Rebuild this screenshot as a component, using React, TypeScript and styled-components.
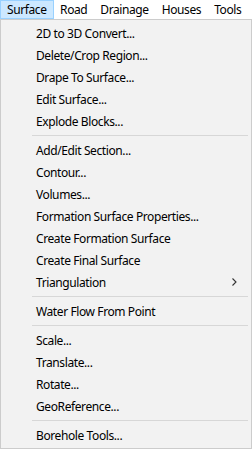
import React from "react";
import styled, { createGlobalStyle } from "styled-components";

const Global = createGlobalStyle`
  html, body { margin: 0; padding: 0; background: #ffffff; }
  body { font-family: "Noto Sans", "Liberation Sans", sans-serif; }
`;

const Page = styled.div`
  width: 252px;
  height: 449px;
  display: flex;
  flex-direction: column;
  overflow: hidden;
  font-size: 12px;
  letter-spacing: -0.4px;
  color: #000;
`;

const MenuBar = styled.div`
  height: 19px;
  display: flex;
  align-items: stretch;
  background: #ffffff;
`;

const BarItem = styled.div<{ $active?: boolean }>`
  display: flex;
  align-items: center;
  padding: 0 ${(p) => (p.$active ? "6px" : "6.5px")};
  border: ${(p) => (p.$active ? "1px solid #99d1ff" : "none")};
  background: ${(p) => (p.$active ? "#cce8ff" : "transparent")};
  line-height: 17px;
  white-space: nowrap;
`;

const Popup = styled.div`
  width: 252px;
  height: 430px;
  box-sizing: border-box;
  border: 1px solid #cccccc;
  background: #f2f2f2;
  padding: 2px 2px 1px 2px;
  display: flex;
  flex-direction: column;
`;

const Item = styled.div`
  height: 22px;
  display: flex;
  align-items: center;
  padding-left: 33px;
  padding-right: 12px;
  white-space: nowrap;
`;

const Label = styled.span`
  flex: 1;
`;

const Separator = styled.div`
  height: 7px;
  display: flex;
  align-items: center;
  padding-left: 29px;
  padding-right: 1px;
  &::after {
    content: "";
    flex: 1;
    height: 1px;
    background: #d7d7d7;
  }
`;

const Chevron = () => (
  <svg width="5" height="8" viewBox="0 0 5 8" style={{ display: "block" }}>
    <path d="M0.5 0.5 L4 4 L0.5 7.5" fill="none" stroke="#333" strokeWidth="1.1" />
  </svg>
);

const groups: { label: string; sub?: boolean }[][] = [
  [
    { label: "2D to 3D Convert..." },
    { label: "Delete/Crop Region..." },
    { label: "Drape To Surface..." },
    { label: "Edit Surface..." },
    { label: "Explode Blocks..." },
  ],
  [
    { label: "Add/Edit Section..." },
    { label: "Contour..." },
    { label: "Volumes..." },
    { label: "Formation Surface Properties..." },
    { label: "Create Formation Surface" },
    { label: "Create Final Surface" },
    { label: "Triangulation", sub: true },
  ],
  [{ label: "Water Flow From Point" }],
  [
    { label: "Scale..." },
    { label: "Translate..." },
    { label: "Rotate..." },
    { label: "GeoReference..." },
  ],
  [{ label: "Borehole Tools..." }],
];

export default function App() {
  return (
    <Page>
      <Global />
      <MenuBar>
        <BarItem $active>Surface</BarItem>
        <BarItem>Road</BarItem>
        <BarItem>Drainage</BarItem>
        <BarItem>Houses</BarItem>
        <BarItem>Tools</BarItem>
      </MenuBar>
      <Popup>
        {groups.map((g, gi) => (
          <React.Fragment key={gi}>
            {gi > 0 && <Separator />}
            {g.map((it) => (
              <Item key={it.label}>
                <Label>{it.label}</Label>
                {it.sub && <Chevron />}
              </Item>
            ))}
          </React.Fragment>
        ))}
      </Popup>
    </Page>
  );
}
